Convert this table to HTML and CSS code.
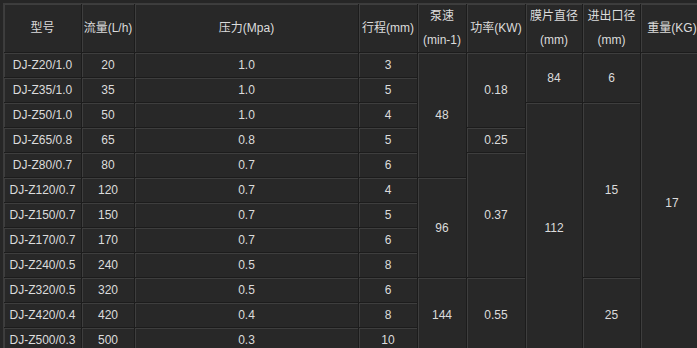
FILE: index.html
```html
<!DOCTYPE html>
<html lang="zh">
<head>
<meta charset="utf-8">
<title>参数表</title>
<link rel="stylesheet" href="styles.css">
</head>
<body>
<table class="spec">
  <colgroup>
    <col class="c-model"><col class="c-flow"><col class="c-press"><col class="c-stroke"><col class="c-speed"><col class="c-power"><col class="c-dia"><col class="c-port"><col class="c-weight">
  </colgroup>
  <thead>
    <tr class="head">
      <th>型号</th>
      <th>流量(L/h)</th>
      <th>压力(Mpa)</th>
      <th>行程(mm)</th>
      <th>泵速<br>(min-1)</th>
      <th>功率(KW)</th>
      <th>膜片直径<br>(mm)</th>
      <th>进出口径<br>(mm)</th>
      <th>重量(KG)</th>
    </tr>
  </thead>
  <tbody>
    <tr><td>DJ-Z20/1.0</td><td>20</td><td>1.0</td><td>3</td><td rowspan="5">48</td><td rowspan="3">0.18</td><td rowspan="2">84</td><td rowspan="2">6</td><td rowspan="12">17</td></tr>
    <tr><td>DJ-Z35/1.0</td><td>35</td><td>1.0</td><td>5</td></tr>
    <tr><td>DJ-Z50/1.0</td><td>50</td><td>1.0</td><td>4</td><td rowspan="10">112</td><td rowspan="7">15</td></tr>
    <tr><td>DJ-Z65/0.8</td><td>65</td><td>0.8</td><td>5</td><td>0.25</td></tr>
    <tr><td>DJ-Z80/0.7</td><td>80</td><td>0.7</td><td>6</td><td rowspan="5">0.37</td></tr>
    <tr><td>DJ-Z120/0.7</td><td>120</td><td>0.7</td><td>4</td><td rowspan="4">96</td></tr>
    <tr><td>DJ-Z150/0.7</td><td>150</td><td>0.7</td><td>5</td></tr>
    <tr><td>DJ-Z170/0.7</td><td>170</td><td>0.7</td><td>6</td></tr>
    <tr><td>DJ-Z240/0.5</td><td>240</td><td>0.5</td><td>8</td></tr>
    <tr><td>DJ-Z320/0.5</td><td>320</td><td>0.5</td><td>6</td><td rowspan="3">144</td><td rowspan="3">0.55</td><td rowspan="3">25</td></tr>
    <tr><td>DJ-Z420/0.4</td><td>420</td><td>0.4</td><td>8</td></tr>
    <tr><td>DJ-Z500/0.3</td><td>500</td><td>0.3</td><td>10</td></tr>
  </tbody>
</table>
</body>
</html>
```
FILE: styles.css
```css
html, body {
  margin: 0;
  padding: 0;
  background: #262626;
  overflow: hidden;
}

body {
  padding: 3px 0 0 3px;
  font-family: "Liberation Sans", "Noto Sans CJK SC", sans-serif;
  font-size: 12px;
  color: #dcdcdc;
}

.spec {
  border-collapse: separate;
  border-spacing: 0;
  table-layout: fixed;
  width: 700px;
  background: #282828;
  border-top: 1px solid #3c3c3c;
  border-left: 1px solid #3c3c3c;
}

.c-model { width: 78px; }
.c-flow { width: 53px; }
.c-press { width: 224px; }
.c-stroke { width: 59px; }
.c-speed { width: 49px; }
.c-power { width: 59px; }
.c-dia { width: 57px; }
.c-port { width: 58px; }
.c-weight { width: 63px; }

.spec th,
.spec td {
  box-sizing: border-box;
  padding: 0;
  text-align: center;
  vertical-align: middle;
  font-weight: normal;
  white-space: nowrap;
  border-right: 1px solid #1c1c1c;
  border-bottom: 1px solid #1c1c1c;
  box-shadow: inset 1px 1px 0 #3e3e3e;
}

.spec th {
  height: 49px;
  line-height: 24px;
}

.spec td {
  height: 25px;
  line-height: 24px;
}
```
